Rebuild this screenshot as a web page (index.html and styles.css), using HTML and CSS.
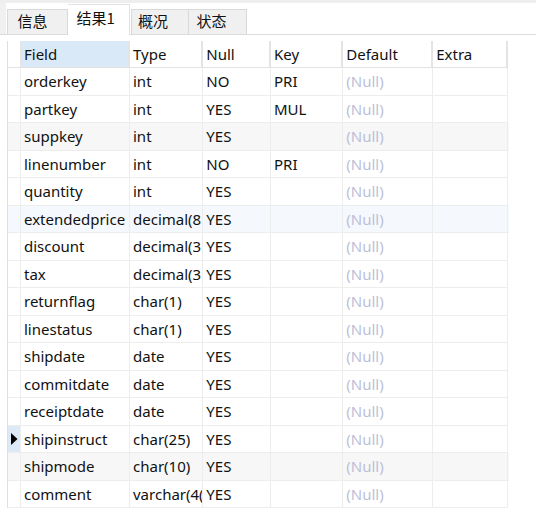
FILE: index.html
```html
<!DOCTYPE html>
<html>
<head>
<meta charset="utf-8">
<link rel="stylesheet" href="styles.css">
</head>
<body>
<div class="tabbar">
  <div class="tab t1">信息</div>
  <div class="tab active">结果1</div>
  <div class="tab t3">概况</div>
  <div class="tab t4">状态</div>
</div>
<div class="grid">
  <div class="row head">
    <div class="c g"></div>
    <div class="c cur">Field</div>
    <div class="c">Type</div>
    <div class="c">Null</div>
    <div class="c">Key</div>
    <div class="c">Default</div>
    <div class="c">Extra</div>
  </div>
  <div class="row"><div class="c g"></div><div class="c">orderkey</div><div class="c">int</div><div class="c">NO</div><div class="c">PRI</div><div class="c nul">(Null)</div><div class="c"></div></div>
  <div class="row"><div class="c g"></div><div class="c">partkey</div><div class="c">int</div><div class="c">YES</div><div class="c">MUL</div><div class="c nul">(Null)</div><div class="c"></div></div>
  <div class="row alt"><div class="c g"></div><div class="c">suppkey</div><div class="c">int</div><div class="c">YES</div><div class="c"></div><div class="c nul">(Null)</div><div class="c"></div></div>
  <div class="row"><div class="c g"></div><div class="c">linenumber</div><div class="c">int</div><div class="c">NO</div><div class="c">PRI</div><div class="c nul">(Null)</div><div class="c"></div></div>
  <div class="row"><div class="c g"></div><div class="c">quantity</div><div class="c">int</div><div class="c">YES</div><div class="c"></div><div class="c nul">(Null)</div><div class="c"></div></div>
  <div class="row hover"><div class="c g"></div><div class="c">extendedprice</div><div class="c">decimal(8</div><div class="c">YES</div><div class="c"></div><div class="c nul">(Null)</div><div class="c"></div></div>
  <div class="row"><div class="c g"></div><div class="c">discount</div><div class="c">decimal(3</div><div class="c">YES</div><div class="c"></div><div class="c nul">(Null)</div><div class="c"></div></div>
  <div class="row"><div class="c g"></div><div class="c">tax</div><div class="c">decimal(3</div><div class="c">YES</div><div class="c"></div><div class="c nul">(Null)</div><div class="c"></div></div>
  <div class="row"><div class="c g"></div><div class="c">returnflag</div><div class="c">char(1)</div><div class="c">YES</div><div class="c"></div><div class="c nul">(Null)</div><div class="c"></div></div>
  <div class="row"><div class="c g"></div><div class="c">linestatus</div><div class="c">char(1)</div><div class="c">YES</div><div class="c"></div><div class="c nul">(Null)</div><div class="c"></div></div>
  <div class="row"><div class="c g"></div><div class="c">shipdate</div><div class="c">date</div><div class="c">YES</div><div class="c"></div><div class="c nul">(Null)</div><div class="c"></div></div>
  <div class="row"><div class="c g"></div><div class="c">commitdate</div><div class="c">date</div><div class="c">YES</div><div class="c"></div><div class="c nul">(Null)</div><div class="c"></div></div>
  <div class="row"><div class="c g"></div><div class="c">receiptdate</div><div class="c">date</div><div class="c">YES</div><div class="c"></div><div class="c nul">(Null)</div><div class="c"></div></div>
  <div class="row sel"><div class="c g"><svg width="7" height="12" viewBox="0 0 7 12"><path d="M0 0 L6.5 6 L0 12 Z" fill="#000"/></svg></div><div class="c">shipinstruct</div><div class="c">char(25)</div><div class="c">YES</div><div class="c"></div><div class="c nul">(Null)</div><div class="c"></div></div>
  <div class="row alt"><div class="c g"></div><div class="c">shipmode</div><div class="c">char(10)</div><div class="c">YES</div><div class="c"></div><div class="c nul">(Null)</div><div class="c"></div></div>
  <div class="row"><div class="c g"></div><div class="c">comment</div><div class="c">varchar(4(</div><div class="c">YES</div><div class="c"></div><div class="c nul">(Null)</div><div class="c"></div></div>
</div>
</body>
</html>
```
FILE: styles.css
```css
html, body {
  margin: 0;
  padding: 0;
  background: #ffffff;
  font-family: "Noto Sans", "Noto Sans CJK SC", sans-serif;
  font-size: 15px;
  color: #111;
}
.tabbar {
  height: 31px;
  border-top: 3.5px solid #eeeeee;
  border-bottom: 1px solid #dcdcdc;
  display: flex;
  align-items: flex-end;
  padding-left: 6.5px;
  background: linear-gradient(to right, #f0f0f0 0, #f0f0f0 6.5px, #ffffff 6.5px);
}
.tab {
  box-sizing: border-box;
  height: 25.5px;
  background: #f0f0f0;
  border: 1px solid #d9d9d9;
  border-bottom: none;
  font-family: "Noto Sans CJK SC", sans-serif;
  font-size: 15px;
  line-height: 21px;
  padding-left: 10px;
  margin-bottom: 0;
}
.t1 { width: 61px; }
.t3 { width: 57.5px; padding-left: 6px; margin-left: 1px; }
.t4 { width: 58.5px; padding-left: 8px; border-left: none; }
.tab.active {
  width: 62.5px;
  height: 31.5px;
  margin-bottom: -1px;
  background: #ffffff;
  border-left: none;
  line-height: 25px;
  padding-left: 9px;
  border-color: #e2e2e2;
}
.grid {
  margin-top: 6px;
  margin-left: 6.5px;
  width: 502px;
}
.row {
  display: grid;
  grid-template-columns: 14.5px 109px 73.3px 67.7px 72.3px 90px 75.2px;
  height: 27.5px;
}
.row.head { height: 27.3px; }
.c {
  box-sizing: border-box;
  border-right: 1px solid #ededed;
  border-bottom: 1px solid #ededed;
  padding-left: 3px;
  line-height: 26px;
  white-space: nowrap;
  overflow: hidden;
}
.c.g {
  border-left: 1px solid #dedede;
  padding-left: 3px;
  display: flex;
  align-items: center;
}
.head .c {
  border-right: 2px solid #e4e4e4;
  border-bottom: 1.5px solid #e2e2e2;
}
.head .c.g { border-right: 1px solid #e4e4e4; }
.head .c.cur { background: #dae9f7; }
.alt { background: #f7f7f7; }
.hover { background: #f5f9fd; }
.sel .c.g { background: #dce9f6; }
.nul { color: #bcbfd8; }
```
